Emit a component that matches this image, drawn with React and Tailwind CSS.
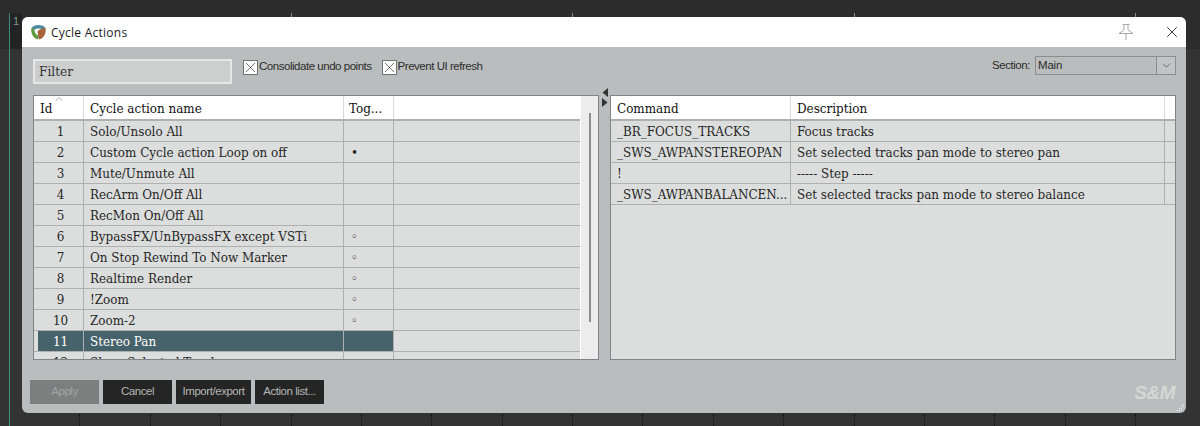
import React from 'react';
import { X, ChevronDown, ChevronUp } from 'lucide-react';

const actions = [
  { id: 1, name: 'Solo/Unsolo All', tog: '' },
  { id: 2, name: 'Custom Cycle action Loop on off', tog: '•' },
  { id: 3, name: 'Mute/Unmute All', tog: '' },
  { id: 4, name: 'RecArm On/Off All', tog: '' },
  { id: 5, name: 'RecMon On/Off All', tog: '' },
  { id: 6, name: 'BypassFX/UnBypassFX except VSTi', tog: '◦' },
  { id: 7, name: 'On Stop Rewind To Now Marker', tog: '◦' },
  { id: 8, name: 'Realtime Render', tog: '◦' },
  { id: 9, name: '!Zoom', tog: '◦' },
  { id: 10, name: 'Zoom-2', tog: '◦' },
  { id: 11, name: 'Stereo Pan', tog: '', selected: true },
  { id: 12, name: 'Show Selected Tracks', tog: '' },
];

const commands = [
  { cmd: '_BR_FOCUS_TRACKS', desc: 'Focus tracks' },
  { cmd: '_SWS_AWPANSTEREOPAN', desc: 'Set selected tracks pan mode to stereo pan' },
  { cmd: '!', desc: '----- Step -----' },
  { cmd: '_SWS_AWPANBALANCEN...', desc: 'Set selected tracks pan mode to stereo balance' },
];

const topTicks = [291, 572, 854, 1135];
const bottomTicks = [79, 150, 220, 291, 361, 431, 502, 572, 642, 713, 783, 854, 924, 994, 1065, 1135];

const Check = ({ label }) => (
  <label className="flex items-center gap-[1px]">
    <span className="w-[15px] h-[15px] border border-[#6f7373] bg-white flex items-center justify-center">
      <X className="w-[17px] h-[17px] shrink-0 text-[#222]" strokeWidth={0.9} />
    </span>
    <span className="text-[11.5px] tracking-[-0.47px] text-[#2c2c2c]">{label}</span>
  </label>
);

const Btn = ({ children, w, disabled }) => (
  <button
    type="button"
    className={`h-[24px] text-[11.5px] tracking-[-0.45px] ${w} ${disabled ? 'bg-[#7d7f7f] text-[#a2a4a4]' : 'bg-[#252525] text-[#b4b6b6]'}`}
  >
    {children}
  </button>
);

const App = () => {
  return (
    <div className="relative w-[1200px] h-[426px] overflow-hidden bg-[#333333] pt-[17px] pl-[22px] font-['Liberation_Sans',sans-serif]">
      {/* backdrop: arrange view behind the dialog */}
      <div className="absolute left-0 top-0 w-full h-[49px] bg-[#2c2c2c]" />
      <div className="absolute left-[10px] top-[13px] w-[12px] h-[36px] bg-[#232323]" />
      <div className="absolute left-[9px] top-[13px] w-px h-[413px] bg-[#3f8f80]" />
      <span className="absolute left-[13px] top-[13px] text-[11px] text-[#7f9a95]">1</span>
      {topTicks.map((x) => (
        <div key={x} className="absolute top-[13px] w-px h-[4px] bg-[#8a8a8a]" style={{ left: x }} />
      ))}
      {bottomTicks.map((x) => (
        <div key={x} className="absolute top-[414px] w-px h-[12px] border-l border-dotted border-[#111]" style={{ left: x }} />
      ))}

      <div className="relative w-[1164px] h-[396px] rounded-[6px] overflow-hidden bg-[#babdbd] flex flex-col">
        {/* title bar */}
        <div className="h-[30px] bg-white flex items-center shrink-0 pl-[9px]">
          <svg width="15" height="16" viewBox="0 0 15 16">
            <path d="M0.5 4 C3 0 12 0 14.5 4 L12.5 6 C10 4 5 4 3 6 Z" fill="#4d8aa0" />
            <path d="M0.5 4 C-0.5 9 2 14 7 15.5 L8 12 C5 11 3 8 3.5 5 Z" fill="#5c9a3c" />
            <path d="M14.5 4 C15.5 9 13 14 8 15.5 L6.5 8 C7 6 10 4.5 14.5 4 Z" fill="#a8633a" />
          </svg>
          <span className="ml-[5px] text-[12px] tracking-[0.25px] text-[#1c1c1c] font-['Open_Sans',sans-serif] mt-px">Cycle Actions</span>
          <svg className="ml-[991px]" width="16" height="18" viewBox="0 0 16 18" fill="none" stroke="#a9a9a9" strokeWidth="1">
            <path d="M4.5 1.5 H11.5 M6 1.5 V7 M10 1.5 V7 M6 7 L1 10.5 H15 L10 7 M8 10.5 V17" />
          </svg>
          <X className="ml-[29px] w-[18px] h-[18px] text-[#111]" strokeWidth={1.1} />
        </div>

        {/* toolbar */}
        <div className="h-[36px] mt-[9px] flex items-start pl-[11px] pr-[10px] shrink-0">
          <div className="mt-[3px] w-[199px] h-[25px] pb-px bg-[#cccfce] border-2 border-[#e6e8e8] rounded-[1px] flex items-center px-[4px] text-[13.5px] text-[#333] font-['DejaVu_Serif_Condensed','DejaVu_Serif',serif]">
            Filter
          </div>
          <div className="ml-[11px] mt-[2px] flex items-center gap-[10px] h-[18px]">
            <Check label="Consolidate undo points" />
            <Check label="Prevent UI refresh" />
          </div>
          <div className="ml-auto flex items-center">
            <span className="text-[11.5px] tracking-[-0.45px] text-[#2c2c2c]">Section:</span>
            <div className="ml-[5px] w-[141px] h-[19px] border border-[#8a8e8e] flex items-center bg-[#babdbd]">
              <span className="flex-1 pl-[2px] text-[11.5px] tracking-[-0.2px] text-[#2c2c2c]">Main</span>
              <span className="w-[19px] h-full border-l border-[#8a8e8e] bg-[#c2c5c5] flex items-center justify-center">
                <ChevronDown className="w-[13px] h-[13px] text-[#444]" strokeWidth={1.25} />
              </span>
            </div>
          </div>
        </div>

        {/* split tables */}
        <div className="flex ml-[11px] mt-[3px] h-[265px] font-['DejaVu_Serif_Condensed','DejaVu_Serif',serif] text-[13.3px] text-[#262626]">
          {/* left list */}
          <div className="relative w-[566px] shrink-0 h-full border border-[#7f8484] bg-[#dcdedd] overflow-hidden flex">
            <div className="w-[546px] shrink-0 flex flex-col">
              <div className="h-[25px] shrink-0 bg-white border-b-2 border-[#aeb1b0] flex items-center text-[#111] relative">
                <div className="w-[50px] h-full pl-[6px] pt-[2px] flex items-center border-r border-[#d8dada]">Id</div>
                <ChevronUp className="absolute left-[19px] top-[-3px] w-[12px] h-[12px] text-[#666]" strokeWidth={1} />
                <div className="w-[260px] h-full pl-[6px] pt-[2px] flex items-center border-r border-[#d8dada]">Cycle action name</div>
                <div className="w-[50px] h-full pl-[5px] pt-[2px] flex items-center border-r border-[#d8dada]">Tog...</div>
              </div>
              {actions.map((a) => (
                <div key={a.id} className="h-[21px] shrink-0 border-b border-[#aeb1b0] flex items-center">
                  <div className={`ml-[4px] w-[46px] h-full text-center leading-[22px] border-r border-[#aeb1b0] ${a.selected ? 'bg-[#46626b] text-white' : ''}`}>{a.id}</div>
                  <div className={`w-[260px] h-full pl-[6px] leading-[22px] border-r border-[#aeb1b0] ${a.selected ? 'bg-[#46626b] text-white' : ''}`}>{a.name}</div>
                  <div className={`w-[50px] h-full pl-[7px] leading-[22px] border-r border-[#aeb1b0] ${a.selected ? 'bg-[#46626b]' : ''}`}>{a.tog}</div>
                </div>
              ))}
            </div>
            {/* scrollbar */}
            <div className="w-[18px] shrink-0 bg-[#ececec] border-l border-white pt-[17px] flex justify-center">
              <div className="w-[2px] h-[209px] bg-[#8e8e8e]" />
            </div>
          </div>

          {/* splitter */}
          <div className="w-[11px] shrink-0 flex flex-col items-center">
            <svg className="mt-[-7px]" width="6" height="20" viewBox="0 0 6 20" fill="#333">
              <path d="M6 0 V9 L0.5 4.5 Z" />
              <path d="M0 10 V19 L5.5 14.5 Z" />
            </svg>
          </div>

          {/* right list */}
          <div className="w-[566px] shrink-0 h-full border border-[#7f8484] bg-[#dcdedd] overflow-hidden flex flex-col">
            <div className="h-[25px] shrink-0 bg-white border-b-2 border-[#aeb1b0] flex items-center text-[#111]">
              <div className="w-[180px] h-full pl-[6px] pt-[2px] flex items-center border-r border-[#d8dada]">Command</div>
              <div className="w-[374px] h-full pl-[6px] pt-[2px] flex items-center border-r border-[#d8dada]">Description</div>
            </div>
            {commands.map((c) => (
              <div key={c.cmd} className="h-[21px] shrink-0 border-b border-[#aeb1b0] flex">
                <div className="w-[180px] h-full pl-[6px] leading-[22px] border-r border-[#aeb1b0] whitespace-nowrap overflow-hidden">{c.cmd}</div>
                <div className="w-[374px] h-full pl-[6px] leading-[22px] border-r border-[#aeb1b0]">{c.desc}</div>
              </div>
            ))}
          </div>
        </div>

        {/* bottom buttons */}
        <div className="flex gap-[4px] ml-[8px] mt-[20px]">
          <Btn w="w-[69px]" disabled>Apply</Btn>
          <Btn w="w-[69px]">Cancel</Btn>
          <Btn w="w-[75px]">Import/export</Btn>
          <Btn w="w-[69px]">Action list...</Btn>
        </div>

        <span className="absolute right-[11px] bottom-[11px] text-[19px] leading-none font-bold italic tracking-[-0.5px] text-[#d6d8d8] font-['Liberation_Sans',sans-serif]">
          S&amp;M
        </span>
        {/* resize grip */}
        <svg className="absolute right-[1px] bottom-[1px]" width="8" height="8" viewBox="0 0 8 8" fill="#eeeeee">
          <rect x="6" y="0" width="1" height="1" />
          <rect x="4" y="2" width="1" height="1" />
          <rect x="6" y="2" width="1" height="1" />
          <rect x="2" y="4" width="1" height="1" />
          <rect x="4" y="4" width="1" height="1" />
          <rect x="0" y="6" width="1" height="1" />
          <rect x="2" y="6" width="1" height="1" />
          <rect x="4" y="6" width="1" height="1" />
        </svg>
      </div>
    </div>
  );
};

export default App;
